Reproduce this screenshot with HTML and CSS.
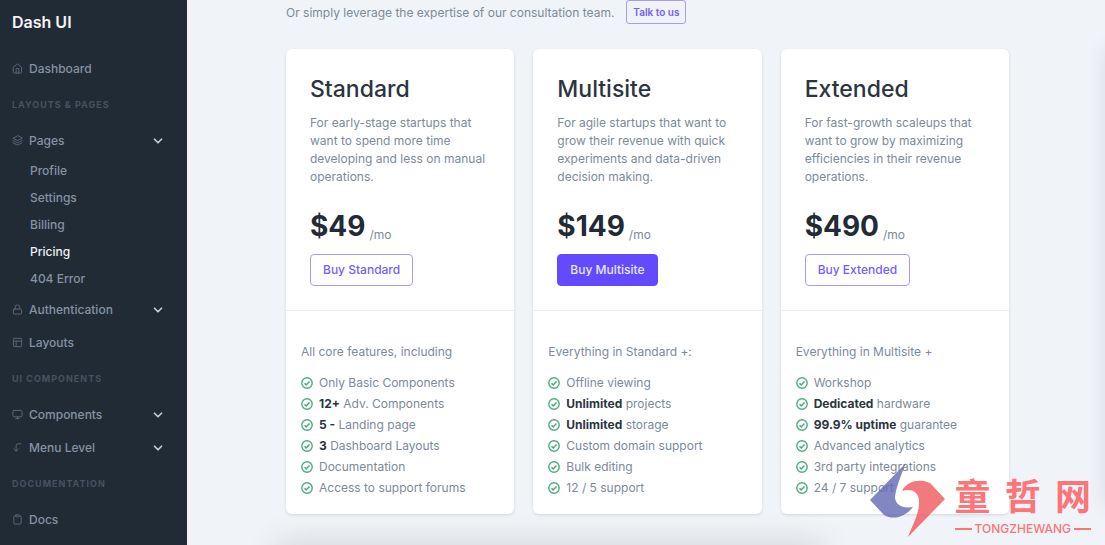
FILE: index.html
```html
<!DOCTYPE html>
<html lang="en">
<head>
<meta charset="utf-8">
<title>Dash UI - Pricing</title>
<link rel="stylesheet" href="styles.css">
</head>
<body>
<svg class="sprite" aria-hidden="true">
  <symbol id="check" viewBox="0 0 24 24"><circle cx="12" cy="12" r="10.4" fill="none" stroke="currentColor" stroke-width="2.8"/><path d="M7 12.5l3.4 3.3 6.600-7" fill="none" stroke="currentColor" stroke-width="3"/></symbol>
  <symbol id="chevron" viewBox="0 0 24 24"><path d="M5 8.500l7 7 7-7" fill="none" stroke="currentColor" stroke-width="3.400" stroke-linecap="round" stroke-linejoin="round"/></symbol>
</svg>
<div class="app">
  <aside class="sidebar">
    <a class="brand" href="#">Dash UI</a>
    <nav class="nav">
      <a class="nav-item" href="#"><svg class="icon" viewBox="0 0 24 24"><path d="M3 9l9-7 9 7v11a2 2 0 0 1-2 2H5a2 2 0 0 1-2-2z"/><path d="M9 22V12h6v10"/></svg>Dashboard</a>
      <h6 class="nav-heading">Layouts &amp; Pages</h6>
      <a class="nav-item" href="#"><svg class="icon" viewBox="0 0 24 24"><path d="M12 2L2 7l10 5 10-5z"/><path d="M2 17l10 5 10-5M2 12l10 5 10-5"/></svg>Pages<svg class="chevron"><use href="#chevron"/></svg></a>
      <div class="submenu">
        <a class="sub-item" href="#">Profile</a>
        <a class="sub-item" href="#">Settings</a>
        <a class="sub-item" href="#">Billing</a>
        <a class="sub-item active" href="#">Pricing</a>
        <a class="sub-item" href="#">404 Error</a>
      </div>
      <a class="nav-item" href="#"><svg class="icon" viewBox="0 0 24 24"><rect x="3" y="11" width="18" height="11" rx="2"/><path d="M7 11V7a5 5 0 0 1 10 0v4"/></svg>Authentication<svg class="chevron"><use href="#chevron"/></svg></a>
      <a class="nav-item" href="#"><svg class="icon" viewBox="0 0 24 24"><rect x="3" y="3" width="18" height="18" rx="2"/><path d="M3 9h18M9 21V9"/></svg>Layouts</a>
      <h6 class="nav-heading">UI Components</h6>
      <a class="nav-item" href="#"><svg class="icon" viewBox="0 0 24 24"><rect x="2" y="3" width="20" height="14" rx="2"/><path d="M8 21h8M12 17v4"/></svg>Components<svg class="chevron"><use href="#chevron"/></svg></a>
      <a class="nav-item" href="#"><svg class="icon" viewBox="0 0 24 24"><path d="M14 15l-5 5-5-5"/><path d="M20 4h-7a4 4 0 0 0-4 4v12"/></svg>Menu Level<svg class="chevron"><use href="#chevron"/></svg></a>
      <h6 class="nav-heading">Documentation</h6>
      <a class="nav-item" href="#"><svg class="icon" viewBox="0 0 24 24"><path d="M16 4h2a2 2 0 0 1 2 2v14a2 2 0 0 1-2 2H6a2 2 0 0 1-2-2V6a2 2 0 0 1 2-2h2"/><rect x="8" y="2" width="8" height="4" rx="1"/></svg>Docs</a>
    </nav>
  </aside>
  <main class="content">
    <div class="intro"><p>Or simply leverage the expertise of our consultation team.</p><button class="btn btn-small" type="button">Talk to us</button></div>
    <div class="plans">
      <section class="card">
        <div class="card-top">
          <h2>Standard</h2>
          <p class="desc">For early-stage startups that want to spend more time developing and less on manual operations.</p>
          <div class="price"><strong>$49</strong><span>/mo</span></div>
          <button class="btn" type="button">Buy Standard</button>
        </div>
        <div class="card-bottom">
          <p>All core features, including</p>
          <ul>
            <li><svg><use href="#check"/></svg><span>Only Basic Components</span></li>
            <li><svg><use href="#check"/></svg><span><b>12+</b> Adv. Components</span></li>
            <li><svg><use href="#check"/></svg><span><b>5 -</b> Landing page</span></li>
            <li><svg><use href="#check"/></svg><span><b>3</b> Dashboard Layouts</span></li>
            <li><svg><use href="#check"/></svg><span>Documentation</span></li>
            <li><svg><use href="#check"/></svg><span>Access to support forums</span></li>
          </ul>
        </div>
      </section>
      <section class="card">
        <div class="card-top">
          <h2>Multisite</h2>
          <p class="desc">For agile startups that want to grow their revenue with quick experiments and data-driven decision making.</p>
          <div class="price"><strong>$149</strong><span>/mo</span></div>
          <button class="btn btn-solid" type="button">Buy Multisite</button>
        </div>
        <div class="card-bottom">
          <p>Everything in Standard +:</p>
          <ul>
            <li><svg><use href="#check"/></svg><span>Offline viewing</span></li>
            <li><svg><use href="#check"/></svg><span><b>Unlimited</b> projects</span></li>
            <li><svg><use href="#check"/></svg><span><b>Unlimited</b> storage</span></li>
            <li><svg><use href="#check"/></svg><span>Custom domain support</span></li>
            <li><svg><use href="#check"/></svg><span>Bulk editing</span></li>
            <li><svg><use href="#check"/></svg><span>12 / 5 support</span></li>
          </ul>
        </div>
      </section>
      <section class="card">
        <div class="card-top">
          <h2>Extended</h2>
          <p class="desc">For fast-growth scaleups that want to grow by maximizing efficiencies in their revenue operations.</p>
          <div class="price"><strong>$490</strong><span>/mo</span></div>
          <button class="btn" type="button">Buy Extended</button>
        </div>
        <div class="card-bottom">
          <p>Everything in Multisite +</p>
          <ul>
            <li><svg><use href="#check"/></svg><span>Workshop</span></li>
            <li><svg><use href="#check"/></svg><span><b>Dedicated</b> hardware</span></li>
            <li><svg><use href="#check"/></svg><span><b>99.9% uptime</b> guarantee</span></li>
            <li><svg><use href="#check"/></svg><span>Advanced analytics</span></li>
            <li><svg><use href="#check"/></svg><span>3rd party integrations</span></li>
            <li><svg><use href="#check"/></svg><span>24 / 7 support</span></li>
          </ul>
        </div>
      </section>
    </div>
  </main>
  <div class="watermark">
    <svg class="mark" viewBox="0 0 75 74"><path d="M36 0C31 12 26 25 25 34C25 41 32 46 43 44C36 53 24 58 14 52L0 37Z" fill="#6468b4"/><path d="M32 28C36 20 44 17 54 18L60 20L75 36L38 74C43 61 50 49 49 37C48 29 42 25 32 28Z" fill="#f0585f"/></svg>
    <div class="mark-text">
      <div class="mark-name" lang="zh"><span>童</span><span>哲</span><span>网</span></div>
      <div class="mark-latin">TONGZHEWANG</div>
    </div>
  </div>
</div>
</body>
</html>
```
FILE: styles.css
```css
* { box-sizing: border-box; }
body { margin: 0; font: 12px/17px Inter, "Liberation Sans", sans-serif; color: #7d8a99; background: #f0f3f8; }
h2, h6, p, ul { margin: 0; padding: 0; }
a { color: inherit; text-decoration: none; }
.sprite { display: none; }
.app { position: relative; display: flex; height: 100vh; overflow: hidden; }
.sidebar { flex: 0 0 187px; background: #212b36; color: #8492a2; }
.brand { display: block; padding: 12px 12px 20px; font-size: 16px; line-height: 20px; font-weight: 600; color: #f4f5f6; }
.nav-item { display: flex; align-items: center; height: 33px; padding: 0 23px 0 12px; font-size: 12px; font-weight: 500; }
.icon { width: 11px; height: 11px; margin-right: 6px; fill: none; stroke: #5d6977; stroke-width: 2; stroke-linecap: round; stroke-linejoin: round; }
.chevron { width: 12px; height: 12px; margin-left: auto; color: #c6ccd2; }
.nav-heading { padding: 11px 12px; font-size: 9px; line-height: 17px; font-weight: 700; letter-spacing: 1px; text-transform: uppercase; color: #465260; }
.submenu { padding-bottom: 1px; }
.sub-item { display: block; padding: 5px 30px; font-weight: 500; }
.sub-item.active { color: #f0f2f4; }
.content { position: relative; flex: 1; min-width: 0; padding: 0 96px 0 99px; }
.content::before { content: ""; position: absolute; top: 100%; left: 10%; right: 31%; height: 20px; box-shadow: 0 0 30px 2px rgba(80, 90, 90, 0.2); }
.content::after { content: ""; position: absolute; top: 48px; bottom: 40px; left: 100%; width: 20px; box-shadow: 0 0 20px rgba(60, 75, 90, 0.12); }
.intro { display: flex; align-items: center; gap: 12px; }
.btn { padding: 7px 12px; font: 500 12px/16px Inter, "Liberation Sans", sans-serif; color: #7460ff; background: transparent; border: 1px solid #a79bff; border-radius: 4px; }
.btn-small { padding: 3px 6px; font-size: 10px; font-weight: 600; border-radius: 3px; }
.btn-solid { color: #e9e6ff; background: #624bff; border-color: #624bff; }
.plans { position: relative; display: grid; grid-template-columns: repeat(3, 1fr); gap: 19px; margin-top: 25px; }
.card { background: #fff; border-radius: 6px; box-shadow: 0 1px 3px rgba(40, 55, 85, 0.14); }
.card-top { padding: 25px 24px 24px; border-bottom: 1px solid #e9edf2; }
.card h2 { font-size: 23px; line-height: 30px; font-weight: 500; color: #2b3541; }
.desc { margin-top: 10px; line-height: 18px; }
.price { display: flex; align-items: flex-end; gap: 4px; margin: 23px 0 11px; color: #212b36; }
.price strong { font-size: 28px; line-height: 34px; font-weight: 700; }
.price span { color: #7d8a99; }
.card-bottom { padding: 32px 15px 18px; }
.card-bottom ul { display: grid; gap: 4px; margin-top: 14px; list-style: none; }
.card-bottom li { display: flex; align-items: center; gap: 6px; }
.card-bottom li svg { width: 12px; height: 12px; color: #4bad7e; }
.card-bottom b { font-weight: 700; color: #2b3541; }
.watermark { position: absolute; right: 14px; bottom: 8px; display: flex; gap: 10px; align-items: flex-end; color: #fb7579; }
.mark { width: 75px; height: 74px; opacity: 0.8; }
.mark-name { display: flex; justify-content: space-between; font: 700 36px/54px "Noto Sans CJK SC", sans-serif; }
.mark-latin { display: flex; align-items: center; gap: 3px; font: 500 12px/16px Inter, sans-serif; }
.mark-latin::before, .mark-latin::after { content: ""; width: 17px; height: 2px; background: currentColor; }
```
